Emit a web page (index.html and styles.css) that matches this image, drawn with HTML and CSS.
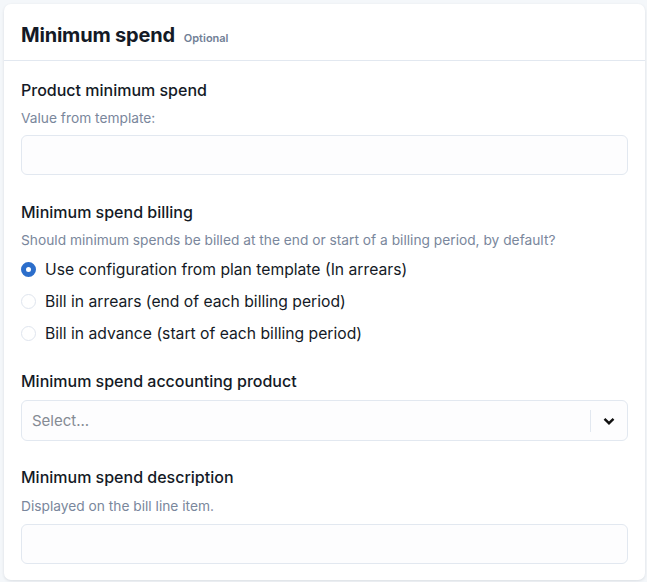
FILE: index.html
```html
<!DOCTYPE html>
<html lang="en">
<head>
  <meta charset="UTF-8">
  <meta name="viewport" content="width=device-width, initial-scale=1.0">
  <title>Minimum spend</title>
  <link rel="stylesheet" href="styles.css">
</head>
<body>
  <div class="card">
    <header class="card-header">
      <h2>Minimum spend</h2>
      <span class="optional">Optional</span>
    </header>
    <div class="card-body">
      <!-- Product minimum spend -->
      <div class="field">
        <label class="field-label">Product minimum spend</label>
        <p class="field-help">Value from template:</p>
        <input type="text" class="text-input">
      </div>
      <!-- Billing -->
      <div class="field tight">
        <label class="field-label">Minimum spend billing</label>
        <p class="field-help">Should minimum spends be billed at the end or start of a billing period, by default?</p>
        <div class="radio-list">
          <label class="radio-row"><span class="radio checked"></span>Use configuration from plan template (In arrears)</label>
          <label class="radio-row"><span class="radio"></span>Bill in arrears (end of each billing period)</label>
          <label class="radio-row"><span class="radio"></span>Bill in advance (start of each billing period)</label>
        </div>
      </div>
      <!-- Accounting product -->
      <div class="field tight">
        <label class="field-label no-help">Minimum spend accounting product</label>
        <div class="select">
          <span class="select-placeholder">Select...</span>
          <span class="select-sep"></span>
          <span class="select-arrow">
            <svg width="14" height="14" viewBox="0 0 14 14"><path d="M2.5 4.8 L7 9.2 L11.5 4.8" fill="none" stroke="#111" stroke-width="2.4" stroke-linejoin="miter"/></svg>
          </span>
        </div>
      </div>
      <!-- Description -->
      <div class="field last">
        <label class="field-label">Minimum spend description</label>
        <p class="field-help wide">Displayed on the bill line item.</p>
        <input type="text" class="text-input">
      </div>
    </div>
  </div>
</body>
</html>
```

FILE: styles.css
```css
/* General */
body {
  background-color: #f4f7fa;
  color: #111827;
  font-family: Inter, "Noto Sans", sans-serif;
  margin: 0;
  padding: 4px 2px 3px 4px;
}

.card {
  background: #fff;
  border-radius: 7px;
  box-shadow: 0 1px 3px rgba(30, 41, 59, 0.12);
}

/* Header */
.card-header {
  display: flex;
  align-items: baseline;
  height: 57px;
  padding: 0 17px;
  border-bottom: 1px solid #e2e8f0;
  box-sizing: border-box;
}

.card-header h2 {
  margin: 0;
  padding-top: 19px;
  font-size: 20px;
  font-weight: 700;
  color: #141a26;
  letter-spacing: -0.2px;
}

.optional {
  margin-left: 9px;
  font-size: 11px;
  font-weight: 600;
  color: #718096;
}

/* Body */
.card-body {
  padding: 18px 17px 16px;
}

.field {
  margin-bottom: 26px;
}

.field.tight {
  margin-bottom: 25px;
}

.field.last {
  margin-bottom: 0;
}

.field-label {
  display: block;
  font-size: 16px;
  line-height: 22px;
  font-weight: 500;
  color: #141a26;
}

.field-label.no-help {
  margin-bottom: 8px;
}

.field-help {
  margin: 7px 0 7px;
  font-size: 13.75px;
  line-height: 20px;
  color: #7a879c;
}

.field-help.wide {
  margin: 8px 0 8px;
}

.text-input {
  display: block;
  width: 100%;
  height: 40px;
  box-sizing: border-box;
  border: 1px solid #e2e8f0;
  border-radius: 6px;
  background: #fdfdfe;
  outline: none;
}

/* Radios */
.radio-list {
  display: flex;
  flex-direction: column;
  gap: 8px;
  margin-top: 6px;
}

.radio-row {
  display: flex;
  align-items: center;
  height: 24px;
  font-size: 15.7px;
  color: #141a26;
}

.radio {
  width: 15px;
  height: 15px;
  box-sizing: border-box;
  border: 1px solid #dfe5ee;
  border-radius: 50%;
  margin-right: 9px;
  background: #fff;
}

.radio.checked {
  border: 5px solid #2c6ecb;
}

/* Select */
.select {
  display: flex;
  align-items: center;
  height: 41px;
  box-sizing: border-box;
  border: 1px solid #e2e8f0;
  border-radius: 6px;
  background: #fdfdfe;
}

.select-placeholder {
  flex: 1;
  padding-left: 10px;
  font-size: 15px;
  color: #858b94;
}

.select-sep {
  width: 1px;
  height: 22px;
  background: #e2e8f0;
}

.select-arrow {
  display: flex;
  align-items: center;
  justify-content: center;
  width: 36px;
}
```
